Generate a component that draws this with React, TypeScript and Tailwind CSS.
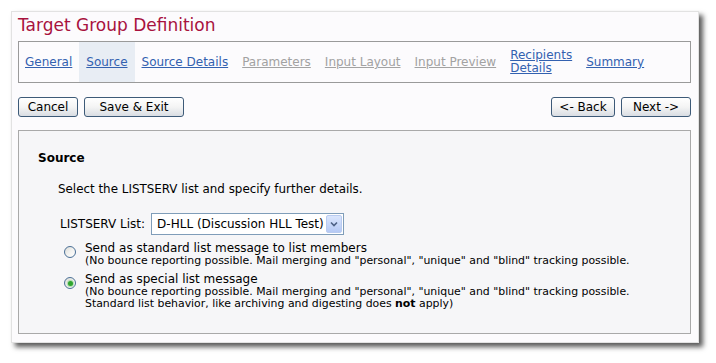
import React from 'react';

const tabs = [
  { label: 'General', enabled: true },
  { label: 'Source', enabled: true, active: true },
  { label: 'Source Details', enabled: true },
  { label: 'Parameters', enabled: false },
  { label: 'Input Layout', enabled: false },
  { label: 'Input Preview', enabled: false },
  { label: 'Recipients Details', enabled: true, twoLine: true },
  { label: 'Summary', enabled: true },
];

const Btn: React.FC<{ children: React.ReactNode; className?: string }> = ({ children, className }) => (
  <button
    className={
      'h-[20px] border border-[#3d5a78] rounded-[3px] bg-gradient-to-b from-white via-[#f4f4f4] to-[#d9dde3] text-[12px] leading-[14px] text-black ' +
      (className || '')
    }
  >
    {children}
  </button>
);

const Radio: React.FC<{ checked?: boolean }> = ({ checked }) => (
  <span className="mt-[5px] ml-[6px] w-[12px] h-[12px] shrink-0 rounded-full border border-[#4a6f96] bg-gradient-to-br from-[#dcdcd8] via-[#f2f2f0] to-white flex items-center justify-center">
    {checked && <span className="w-[5px] h-[5px] rounded-full bg-[#2fa52f] shadow-[0_0_1px_1px_rgba(120,200,120,0.6)]" />}
  </span>
);

export default function App() {
  return (
    <div
      className="w-[716px] h-[363px] bg-white pt-[11px] pl-[11px] text-black"
      style={{ fontFamily: '"DejaVu Sans", Verdana, sans-serif' }}
    >
      <div className="w-[688px] h-[332px] border border-[#e2e2e2] bg-[#fcfbfd] shadow-[4px_4px_5px_rgba(0,0,0,0.65)] pl-[6px] pr-[7px] pt-[2px]">
        <h1 className="text-[17px] leading-[22px] text-[#a8123e]">Target Group Definition</h1>

        <div className="mt-[5px] h-[42px] border border-[#9a9a9a] flex items-stretch">
          {tabs.map((t, i) => (
            <div
              key={t.label}
              className={
                'flex items-center text-[12px] ' +
                (i === 0 ? 'pl-[6px] pr-[7px] ' : 'px-[7px] ') +
                (t.active ? 'bg-[#e8edf4]' : '')
              }
            >
              <span
                className={
                  'underline ' +
                  (t.twoLine ? 'leading-[13px] ' : 'leading-[14px] ') +
                  (t.enabled ? 'text-[#3361b0]' : 'text-[#a2a2a2]')
                }
              >
                {t.twoLine ? (
                  <>
                    Recipients
                    <br />
                    Details
                  </>
                ) : (
                  t.label
                )}
              </span>
            </div>
          ))}
        </div>

        <div className="mt-[14px] flex justify-between">
          <div className="flex gap-[6px]">
            <Btn className="w-[60px]">Cancel</Btn>
            <Btn className="w-[100px]">Save &amp; Exit</Btn>
          </div>
          <div className="flex gap-[6px]">
            <Btn className="w-[64px]">&lt;- Back</Btn>
            <Btn className="w-[70px]">Next -&gt;</Btn>
          </div>
        </div>

        <div className="mt-[13px] h-[204px] border border-[#a9a9a9] bg-[#f6f6f8] pl-[19px] pt-[19px]">
          <div className="text-[12px] leading-[16px] font-bold">Source</div>
          <div className="pl-[20px]">
            <div className="mt-[15px] text-[11.9px] leading-[16px]">
              Select the LISTSERV list and specify further details.
            </div>

            <div className="mt-[16px] flex items-center pl-[2px]">
              <span className="text-[12px] leading-[14px]">LISTSERV List:</span>
              <div className="ml-[6px] w-[193px] h-[22px] border border-[#7f9db9] bg-white flex items-center justify-between">
                <span className="pl-[5px] text-[12px] leading-[14px]">D-HLL (Discussion HLL Test)</span>
                <span className="mr-[1px] w-[16px] h-[18px] rounded-[2px] border border-[#b9cbf0] bg-gradient-to-b from-[#dbe6fd] to-[#b5c9f5] flex items-center justify-center">
                  <svg width="8" height="6" viewBox="0 0 8 6">
                    <path d="M1 1.5 L4 4.5 L7 1.5" fill="none" stroke="#4d6185" strokeWidth="1.6" />
                  </svg>
                </span>
              </div>
            </div>

            <div className="mt-[6px] flex items-start">
              <Radio />
              <div className="ml-[9px]">
                <div className="text-[12px] leading-[14px]">Send as standard list message to list members</div>
                <div className="text-[10.9px] leading-[12px]">
                  (No bounce reporting possible. Mail merging and "personal", "unique" and "blind" tracking possible.
                </div>
              </div>
            </div>

            <div className="mt-[5px] flex items-start">
              <Radio checked />
              <div className="ml-[9px]">
                <div className="text-[12px] leading-[14px]">Send as special list message</div>
                <div className="text-[10.9px] leading-[12px]">
                  (No bounce reporting possible. Mail merging and "personal", "unique" and "blind" tracking possible.
                  <br />
                  Standard list behavior, like archiving and digesting does <b>not</b> apply)
                </div>
              </div>
            </div>
          </div>
        </div>
      </div>
    </div>
  );
}
